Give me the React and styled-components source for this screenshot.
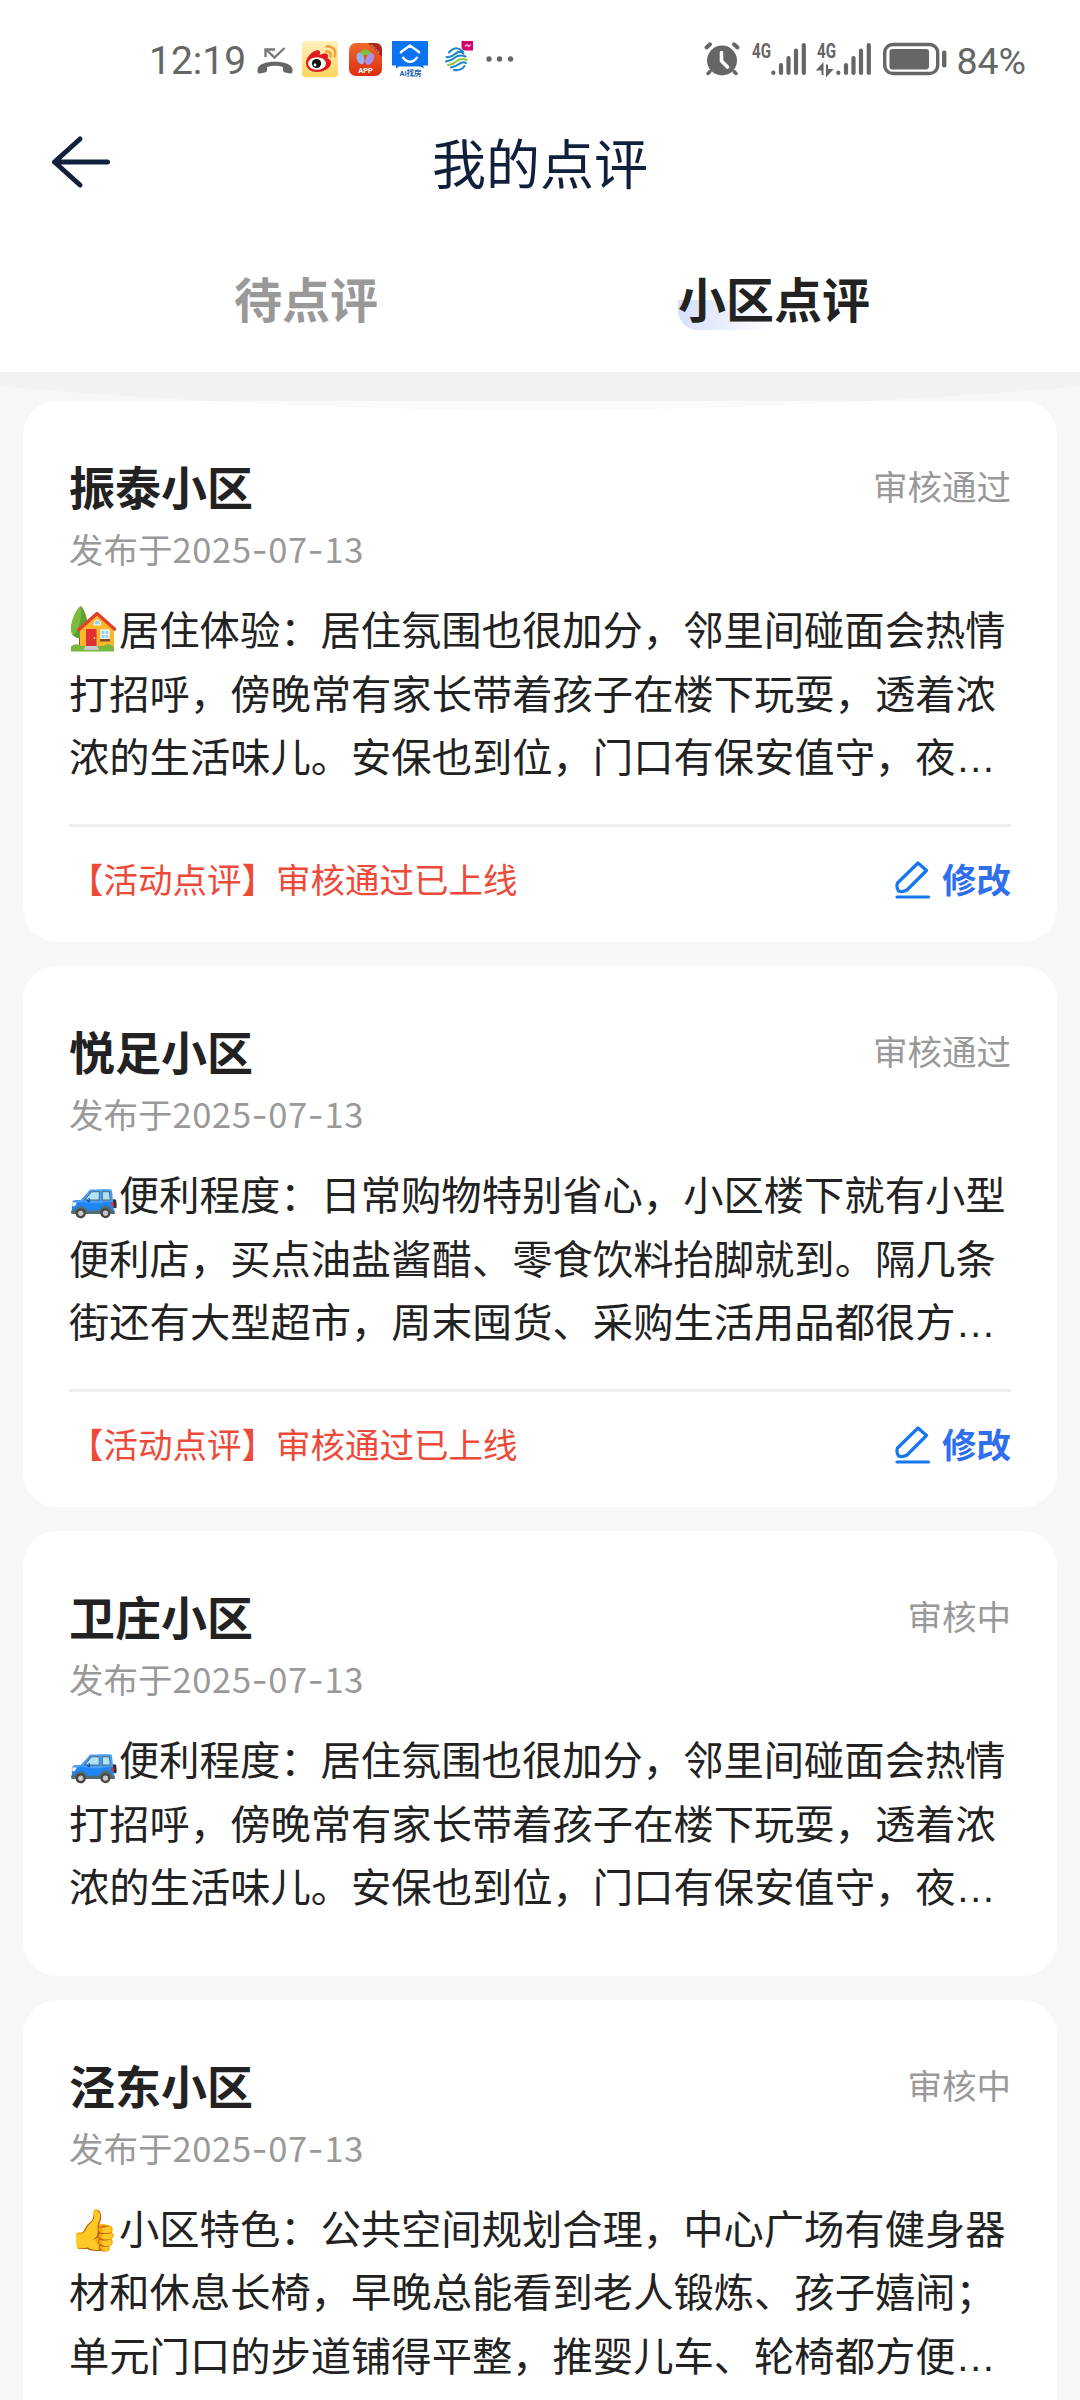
import React from "react"
import styled, { createGlobalStyle } from "styled-components";

const cards = [
	{
		name: "振泰小区",
		status: "审核通过",
		date: "2025-07-13",
		emoji: "house",
		lines: [
			"居住体验：居住氛围也很加分，邻里间碰面会热情",
			"打招呼，傍晚常有家长带着孩子在楼下玩耍，透着浓",
			"浓的生活味儿。安保也到位，门口有保安值守，夜",
		],
		notice: "【活动点评】审核通过已上线",
	},
	{
		name: "悦足小区",
		status: "审核通过",
		date: "2025-07-13",
		emoji: "🚙",
		lines: [
			"便利程度：日常购物特别省心，小区楼下就有小型",
			"便利店，买点油盐酱醋、零食饮料抬脚就到。隔几条",
			"街还有大型超市，周末囤货、采购生活用品都很方",
		],
		notice: "【活动点评】审核通过已上线",
	},
	{
		name: "卫庄小区",
		status: "审核中",
		date: "2025-07-13",
		emoji: "🚙",
		lines: [
			"便利程度：居住氛围也很加分，邻里间碰面会热情",
			"打招呼，傍晚常有家长带着孩子在楼下玩耍，透着浓",
			"浓的生活味儿。安保也到位，门口有保安值守，夜",
		],
	},
	{
		name: "泾东小区",
		status: "审核中",
		date: "2025-07-13",
		emoji: "👍",
		lines: [
			"小区特色：公共空间规划合理，中心广场有健身器",
			"材和休息长椅，早晚总能看到老人锻炼、孩子嬉闹；",
			"单元门口的步道铺得平整，推婴儿车、轮椅都方便",
		],
	},
];

const MissedCall = () => (
	<Icon width="36" height="36" viewBox="0 0 36 36" $left={11}>
		<path d="M0.500 28.500C0.500 18 35.500 18 35.500 28.500v2q0 2.500-2.500 2l-5-1q-2-.5-2-2.500v-3q-8-2.500-16 0v3q0 2-2 2.500l-5 1q-2.500.5-2.500-2z" fill="#666" />
		<path d="M8.500 16V8.500H18M9 8.500l8.500 8L27.500 7" fill="none" stroke="#777" strokeWidth="2.400" />
	</Icon>
);

const Weibo = () => (
	<Icon width="36" height="36" viewBox="0 0 36 36" $left={9}>
		<defs>
			<linearGradient id="weibo" x1="0" y1="0" x2="0" y2="1">
				<stop offset="0" stopColor="#fff0bf" />
				<stop offset="1" stopColor="#ffd65f" />
			</linearGradient>
		</defs>
		<rect width="36" height="36" rx="3" fill="url(#weibo)" />
		<path d="M4 22C4 15 13 8 17 9.500c2 1 1 3 .5 4.500 3-1.500 8-2.500 8.500.5.300 1.500-.5 2.500-.5 3 2 .5 4 2 3.500 5C28 28 21 31 15 31S4 28 4 22z" fill="#e0191f" />
		<ellipse cx="15" cy="22.500" rx="9" ry="6.300" fill="#fff" />
		<circle cx="14.500" cy="22.500" r="4.600" fill="#111" />
		<circle cx="13" cy="24" r="1.400" fill="#fff" />
		<path d="M24 10.500c3.500-.8 5.500 2 4.500 5M24.500 5.500c6-1 10.500 4 8 10" fill="none" stroke="#f5a33e" strokeWidth="2.600" strokeLinecap="round" />
	</Icon>
);

const CarrierApp = () => (
	<Icon width="33" height="33" viewBox="0 0 33 33" $left={11}>
		<defs>
			<linearGradient id="carrier" x1="0" y1="0" x2="0" y2="1">
				<stop offset="0" stopColor="#f2672f" />
				<stop offset="1" stopColor="#dc2d10" />
			</linearGradient>
		</defs>
		<rect width="33" height="33" rx="7" fill="url(#carrier)" />
		<path d="M19 0h7q7 0 7 7v7z" fill="#a8281c" />
		<path d="M22.500 2l8.500 8.500" stroke="#e8795c" strokeWidth="1.600" strokeDasharray="2 1" />
		<path d="M10 10.500q6.500-8 13 0l-3 4q-3.500-6-7 0z" fill="#7bc043" />
		<ellipse cx="11.500" cy="15.500" rx="3.600" ry="6" transform="rotate(-20 11.500 15.500)" fill="#8fb6f2" />
		<ellipse cx="20.800" cy="16" rx="3.800" ry="6.300" transform="rotate(28 20.800 16)" fill="#a992e6" />
		<text x="16.500" y="30" textAnchor="middle" fontSize="7.500" fontWeight="700" fill="#fff">APP</text>
	</Icon>
);

const AiApp = () => (
	<Icon width="36" height="36" viewBox="0 0 36 36" $left={10}>
		<path d="M0 0h36v24.500h-5l1 3-4-2H7l-3 2v-3H0z" fill="#0b72f2" />
		<path d="M9 12.500v-1.500L18 4.500l9 6.500v1.500" fill="none" stroke="#fff" strokeWidth="2.400" strokeLinejoin="round" />
		<path d="M10.500 16q7.500 9.500 15 0" fill="none" stroke="#fff" strokeWidth="2.400" />
		<text x="18.500" y="34.500" textAnchor="middle" fontSize="7.500" fontWeight="700" fill="#1b5fae">AI找房</text>
	</Icon>
);

const MobileApp = () => (
	<Icon width="29" height="36" viewBox="0 0 29 36" $left={17}>
		<g fill="none" strokeWidth="2.100" strokeLinecap="round">
			<path d="M4 11.500Q11 3.500 18 10.500M1.500 16q4 1 8.500-3t8.500-.5M1 20.500Q6 20 10 16.500t10.500-1" stroke="#1e86c8" />
			<path d="M3 24q5-.5 9-4t9.500-1" stroke="#8dc63f" />
			<path d="M6 26.500q4-.5 8-3.500t7-1M9 29q7 1 10.500-4" stroke="#1e86c8" />
		</g>
		<path d="M16.500 0H28v9.500h-7q-4.500 0-4.500-4z" fill="#d6006c" />
		<path d="M20 5.500l2-2 1.500 2 2.500-2" fill="none" stroke="#f6b8d6" strokeWidth="1.300" />
	</Icon>
);

const Alarm = () => (
	<Icon width="36" height="34" viewBox="0 0 36 34">
		<circle cx="18" cy="18.500" r="15" fill="#666" />
		<path d="M2.500 5.500l3.500-3.200M33.500 5.500L30 2.300" stroke="#666" strokeWidth="4" strokeLinecap="round" />
		<path d="M6 29.500l-2 2M30 29.500l2 2" stroke="#666" strokeWidth="3.500" strokeLinecap="round" />
		<path d="M17.500 10.500v8.500l6 6" fill="none" stroke="#fff" strokeWidth="3.600" strokeLinecap="round" strokeLinejoin="round" />
	</Icon>
);

const Signal = ({ left, arrows }) => (
	<Icon width="54" height="34" viewBox="0 0 54 34" $left={left}>
		<text x="0" y="15.500" fontSize="20" fontWeight="700" fill="#666" textLength="19" lengthAdjust="spacingAndGlyphs">4G</text>
		<g stroke="#666" strokeWidth="4.200" strokeLinecap="round">
			<path d="M21.300 30.500v0.500M29 23v8M36.500 16v15M44 8.500V31M51.800 3v28" />
		</g>
		{arrows && <path d="M5.500 33V22.500L1 27.500h4.500M10 22.500V33l4.500-5H10" fill="#666" stroke="#666" strokeWidth="2" />}
	</Icon>
);

const Battery = () => (
	<Icon width="64" height="34" viewBox="0 0 64 34" $left={12}>
		<rect x="1.700" y="2.500" width="53" height="29" rx="8" fill="none" stroke="#666" strokeWidth="3.400" />
		<rect x="6.500" y="7" width="39.500" height="20.500" rx="3" fill="#666" />
		<rect x="59" y="8.500" width="4.400" height="17" rx="2" fill="#666" />
	</Icon>
);

const House = () => (
	<svg width="45" height="46" viewBox="0 0 45 46">
		<path d="M8 28h3.500v12H8z" fill="#8a5a2b" />
		<path d="M10 0C5 3 0 15 0 23c0 6 4 9.500 9 9.500s8-4 8-10C17 14 14 4 10 0z" fill="#5fa234" />
		<path d="M10 0c-5 3-10 15-10 23 0 3 1 5 2 6.500C8 24 11 12 10 0z" fill="#7dbb3e" />
		<path d="M9 22L27 7l16 15v19H9z" fill="#fbb62c" />
		<path d="M8 23.500L26 7.500 43.500 23" fill="none" stroke="#e3402b" strokeWidth="3.400" strokeLinejoin="round" strokeLinecap="round" />
		<rect x="15" y="23" width="10.500" height="17" fill="#e02f35" />
		<circle cx="23.500" cy="32" r="0.900" fill="#fbd35c" />
		<rect x="30" y="24" width="8" height="9" fill="#8ed4f5" stroke="#fff" strokeWidth="1.200" />
		<path d="M34 24v9M30 28.500h8" stroke="#fff" strokeWidth="1" />
		<rect x="29" y="33" width="10" height="2.500" fill="#7a4b2b" />
		<path d="M23 19q0-5 3.300-5t3.200 5z" fill="#8ed4f5" stroke="#fff" strokeWidth="1" />
		<path d="M0 40.500q5-4 10-.5h22q6-4 11 1v4.500H0z" fill="#79b83b" />
		<path d="M14 40h12.500l1.500 4H12.500z" fill="#c9c9c9" />
	</svg>
);

const PostedOn = ({ date }) => {
	const [year, month, day] = date.split("-");
	return(
		<PostDate>
			发布于<Digits>{year}<Hyphen>-</Hyphen>{month}<Hyphen>-</Hyphen>{day}</Digits>
		</PostDate>
	);
}

const Card = ({ card }) => (
	<CardBox>
		<CardHead>
			<Name>{card.name}</Name>
			<Status>{card.status}</Status>
		</CardHead>
		<PostedOn date={card.date} />
		<Body>
			<Line><Emoji>{card.emoji === "house" ? <House /> : card.emoji}</Emoji>{card.lines[0]}</Line>
			<Line>{card.lines[1]}</Line>
			<Line>{card.lines[2]}<Dots>…</Dots></Line>
		</Body>
		{card.notice && (
			<CardFoot>
				<Notice>{card.notice}</Notice>
				<EditBtn type="button">
					<Pencil width="36" height="38" viewBox="0 0 36 38">
						<path d="M23 2L31.500 9.500 12 29Q7.500 31.500 3.500 30 1 26 2.500 22z" />
						<path d="M2 36h31.500" />
					</Pencil>
					修改
				</EditBtn>
			</CardFoot>
		)}
	</CardBox>
);

const App = () => {
	return(
		<Page>
			<GlobalStyle />
			<StatusBar>
				<Group>
					<Clock>12:19</Clock>
					<MissedCall />
					<Weibo />
					<CarrierApp />
					<AiApp />
					<MobileApp />
					<Icon width="28" height="6" viewBox="0 0 28 6" fill="#666" $left={12}>
						<circle cx="3" cy="3" r="2.700" />
						<circle cx="13.500" cy="3" r="2.700" />
						<circle cx="24.500" cy="3" r="2.700" />
					</Icon>
				</Group>
				<Group>
					<Alarm />
					<Signal left={12} />
					<Signal left={11} arrows />
					<Battery />
					<Percent>84%</Percent>
				</Group>
			</StatusBar>
			<Header>
				<Back type="button">
					<svg width="62" height="54" viewBox="0 0 62 54" fill="none" stroke="#101f3c" strokeWidth="5" strokeLinecap="round" strokeLinejoin="round">
						<path d="M30 4L4.500 27 30 50M4.500 27h53" />
					</svg>
				</Back>
				<Title>我的点评</Title>
			</Header>
			<Tabs>
				<Tab>待点评</Tab>
				<Tab $active><TabText>小区点评</TabText></Tab>
			</Tabs>
			<List>
				{cards.map((card) => <Card key={card.name} card={card} />)}
				<Glow width="1080" height="39" viewBox="0 0 1080 39">
					<path d="M0 0H1080V14.500Q540 61.500 0 14.500z" />
				</Glow>
			</List>
		</Page>
	);
}

const GlobalStyle = createGlobalStyle`
	body {
		margin: 0;
		background: #fff;
	}
`
const Page = styled.div`
	display: flex;
	flex-direction: column;
	width: 1080px;
	height: 2400px;
	overflow: hidden;
	background: #fff;
	color: #222;
	font-family: "Noto Sans CJK SC", sans-serif;
	text-spacing-trim: space-all;
`
const StatusBar = styled.div`
	display: flex;
	justify-content: space-between;
	flex: none;
	height: 118px;
	padding: 0 54px 0 149px;
	box-sizing: border-box;
	color: #666;
	font-family: Roboto, "Noto Sans CJK SC", sans-serif;
`
const Group = styled.div`
	display: flex;
	align-items: center;
`
const Icon = styled.svg`
	flex: none;
	margin-left: ${(props) => props.$left || 0}px;
	overflow: visible;
`
const Clock = styled.span`
	width: 97px;
	padding-top: 4px;
	font-size: 39px;
	white-space: nowrap;
`
const Percent = styled.span`
	margin-left: 9px;
	padding-top: 4px;
	font-size: 37.5px;
`
const Header = styled.div`
	display: flex;
	align-items: center;
	flex: none;
	height: 92px;
	padding: 0 50px;
`
const Back = styled.button`
	display: flex;
	width: 62px;
	margin: -4px 0 0;
	padding: 0;
	border: 0;
	background: none;
`
const Title = styled.h1`
	flex: 1;
	margin: -4px 62px 0 0;
	color: #101f3c;
	font-size: 54px;
	font-weight: 400;
	line-height: 80px;
	text-align: center;
`
const Tabs = styled.div`
	display: flex;
	flex: none;
	height: 162px;
	padding: 51px 72px 0;
	box-sizing: border-box;
`
const Tab = styled.div`
	flex: 1;
	color: ${(props) => (props.$active ? "#222" : "#999")};
	font-size: 48px;
	font-weight: 700;
	line-height: 72px;
	text-align: center;
`
const TabText = styled.span`
	display: inline-block;
	background: linear-gradient(90deg, #d6dffa, #fff) 0 39px / 96px 30px no-repeat;
	border-radius: 0 0 0 20px;
	height: 69px;
`
const List = styled.div`
	position: relative;
	display: flex;
	flex-direction: column;
	gap: 23.5px;
	flex: 1;
	min-height: 0;
	padding: 29px 23px 0;
	overflow: hidden;
	background: #f7f7f7;
`
const Glow = styled.svg`
	position: absolute;
	top: 0;
	left: 0;
	fill: rgba(0, 0, 0, 0.018);
`
const CardBox = styled.div`
	flex: none;
	padding: 52px 46px 0;
	border-radius: 34px;
	background: #fff;
`
const CardHead = styled.div`
	display: flex;
	align-items: center;
	justify-content: space-between;
	height: 65px;
	padding-bottom: 1px;
	box-sizing: border-box;
`
const Name = styled.h2`
	margin: 0;
	font-size: 46px;
	line-height: 64px;
`
const Status = styled.span`
	color: #999;
	font-size: 34.5px;
	line-height: 64px;
`
const PostDate = styled.div`
	height: 60px;
	color: #999;
	font-size: 34.5px;
	line-height: 60px;
`
const Digits = styled.span`
	letter-spacing: 0.65px;
`
const Hyphen = styled.span`
	font-family: Inter, sans-serif;
	line-height: 1;
`
const Body = styled.div`
	padding: 18.2px 0 59.4px;
	font-size: 40.3px;
	line-height: 63.6px;
`
const Line = styled.div`
	height: 63.6px;
	white-space: nowrap;
`
const Emoji = styled.span`
	display: inline-block;
	width: 49px;
	margin-right: 1px;

	svg {
		margin-left: 2px;
		vertical-align: -7px;
	}
`
const Dots = styled.span`
	font-family: "Liberation Sans", sans-serif;
	line-height: 1;
`
const CardFoot = styled.div`
	display: flex;
	align-items: center;
	justify-content: space-between;
	height: 115px;
	margin-top: -22px;
	border-top: 3px solid #eee;
`
const Notice = styled.span`
	margin-top: -13px;
	color: #ee4a3a;
	font-size: 34.5px;
`
const EditBtn = styled.button`
	display: flex;
	align-items: center;
	gap: 11px;
	margin: -13px 0 0;
	padding: 0;
	border: 0;
	background: none;
	color: #2f6fee;
	font-family: inherit;
	font-size: 34.5px;
	font-weight: 700;
`
const Pencil = styled.svg`
	margin-top: 4px;
	fill: none;
	stroke: #1677ef;
	stroke-width: 3.2px;
	stroke-linejoin: round;
	stroke-linecap: round;
`

export default App;
